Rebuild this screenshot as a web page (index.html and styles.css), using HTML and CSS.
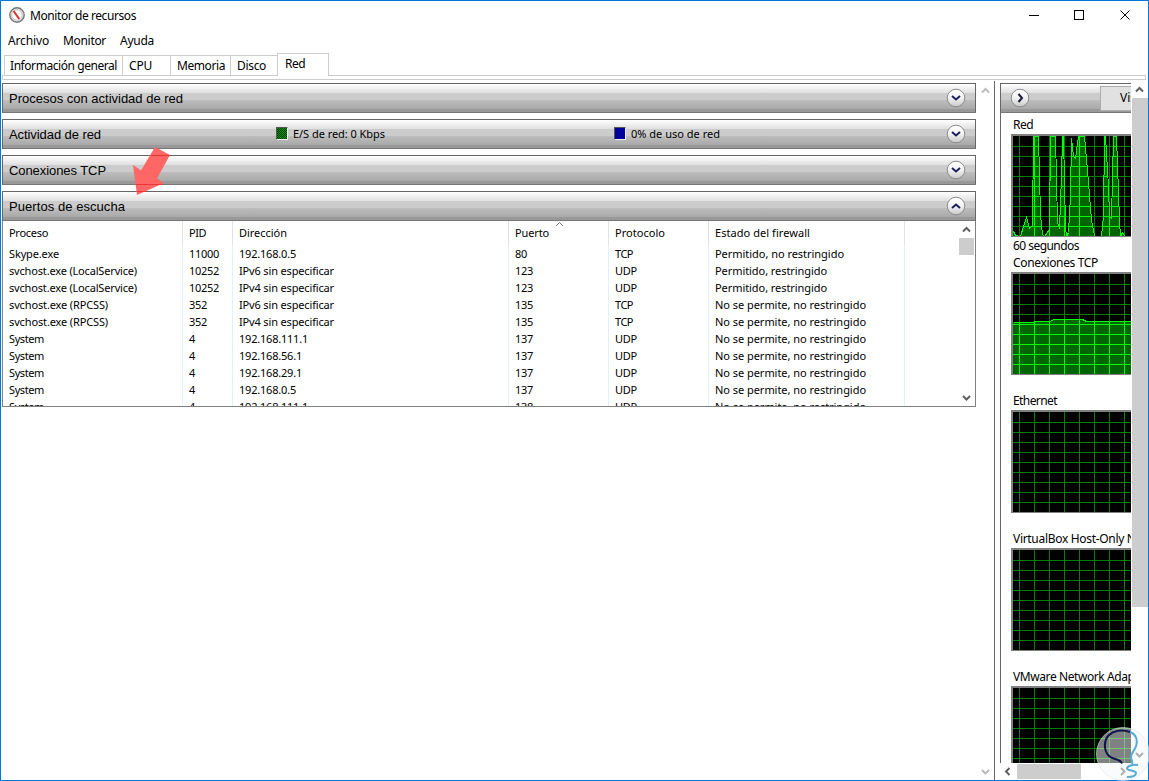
FILE: index.html
```html
<!DOCTYPE html>
<html lang="es">
<head>
    <meta charset="UTF-8">
    <meta name="viewport" content="width=device-width, initial-scale=1.0">
    <title>Monitor de recursos</title>
    <link rel="stylesheet" href="styles.css">
</head>
<body>
    <div class="window">
        <header class="titlebar">
            <svg class="app-icon" width="16" height="16" viewBox="0 0 16 16">
                <circle cx="8" cy="8" r="7.2" fill="#e4e4e4" stroke="#777" stroke-width="1.4"/>
                <circle cx="8" cy="8" r="5.2" fill="#fff" stroke="#bbb" stroke-width=".8"/>
                <path d="M4.6 4l5.6 8" stroke="#e32a2a" stroke-width="2"/>
            </svg>
            <h1><span class="fit" data-w="106">Monitor de recursos</span></h1>
            <svg class="win-buttons" width="110" height="12" viewBox="0 0 110 12" fill="none" stroke="#000">
                <path d="M4 6.500h10"/>
                <rect x="49.500" y="1.500" width="9" height="9"/>
                <path d="M95.500 1.500l9 9m0-9l-9 9"/>
            </svg>
        </header>
        <nav class="menu">
            <span class="fit" data-w="41">Archivo</span>
            <span class="fit" data-w="43">Monitor</span>
            <span class="fit" data-w="34">Ayuda</span>
        </nav>
        <div class="tabs">
            <div class="tab tab-info"><span class="fit" data-w="107">Información general</span></div>
            <div class="tab tab-cpu"><span class="fit" data-w="23">CPU</span></div>
            <div class="tab tab-mem"><span class="fit" data-w="48">Memoria</span></div>
            <div class="tab tab-disk"><span class="fit" data-w="29">Disco</span></div>
            <div class="tab active"><span class="fit" data-w="20">Red</span></div>
        </div>
        <div class="tab-edge"></div>

        <main class="content">
            <div class="left">
                <div class="sections">
                    <section class="bar">
                        <h2><span class="fit" data-w="174">Procesos con actividad de red</span></h2>
                        <svg class="round" width="20" height="20"><use href="#down"/></svg>
                    </section>
                    <section class="bar">
                        <h2><span class="fit" data-w="92">Actividad de red</span></h2>
                        <div class="legend"><i class="box green"></i><span class="fit" data-w="92">E/S de red: 0 Kbps</span></div>
                        <div class="legend"><i class="box blue"></i><span class="fit" data-w="89">0% de uso de red</span></div>
                        <svg class="round" width="20" height="20"><use href="#down"/></svg>
                    </section>
                    <section class="bar">
                        <h2><span class="fit" data-w="97">Conexiones TCP</span></h2>
                        <svg class="round" width="20" height="20"><use href="#down"/></svg>
                    </section>
                    <section class="bar open">
                        <h2><span class="fit" data-w="116">Puertos de escucha</span></h2>
                        <svg class="round" width="20" height="20"><use href="#up"/></svg>
                    </section>
                    <div class="list">
                        <div class="table" id="table"></div>
                        <div class="scroll-v">
                            <svg width="15" height="17"><use href="#arrow-up"/></svg>
                            <div class="thumb"></div>
                            <svg class="last" width="15" height="17"><use href="#arrow-down"/></svg>
                        </div>
                    </div>
                </div>
                <div class="scroll-v idle">
                    <svg width="15" height="17"><use href="#arrow-up"/></svg>
                    <svg class="last" width="15" height="17"><use href="#arrow-down"/></svg>
                </div>
            </div>

            <aside class="right">
                <div class="pane">
                    <div class="bar bar-side">
                        <svg class="round" width="20" height="20"><use href="#next"/></svg>
                        <button type="button" class="views">Vistas</button>
                    </div>
                    <div class="charts" id="charts"></div>
                    <div class="scroll-h">
                        <svg width="17" height="17"><use href="#arrow-left"/></svg>
                        <div class="thumb"></div>
                        <svg class="last" width="17" height="17"><use href="#arrow-right"/></svg>
                    </div>
                </div>
                <div class="scroll-v side">
                    <svg width="15" height="17"><use href="#arrow-up"/></svg>
                    <div class="thumb"></div>
                    <svg class="last" width="15" height="17"><use href="#arrow-down"/></svg>
                </div>
            </aside>
        </main>
    </div>

    <!-- flecha roja -->
    <svg class="pointer" width="40" height="52" viewBox="0 0 40 52">
        <path d="M23 1L38 9 25 32.500 32 37 5 49 1 19 9 24.500z" fill="#ff6666"/>
        <path d="M19 9.500h19M4 38.500h26M5 45.500h9" stroke="#ec3636" stroke-width="1"/>
    </svg>

    <!-- marca de agua -->
    <svg class="watermark" width="54" height="54" viewBox="0 0 54 54">
        <circle cx="28" cy="27" r="26.500" fill="#f6f7fa" fill-opacity=".52" stroke="#dfe3ee" stroke-opacity=".6"/>
        <path d="M27 36.500C25 31 18 33 14 29 8 23 9 13 14 8c4-4 12-6 21-3" fill="none" stroke="#10124e" stroke-width="2"/>
        <path d="M35 5c6 2 8 8 6 14-1 4-5 7-5 11 0 3 2 4 1 7" fill="none" stroke="#55add4" stroke-width="2"/>
        <path d="M43 38c-5-1-11 1-11 3.500S41 43 41 46s-5 4-9 4" fill="none" stroke="#55add4" stroke-width="2"/>
    </svg>

    <svg class="defs" width="0" height="0">
        <defs>
            <linearGradient id="shine" x1="0" y1="0" x2="0" y2="1">
                <stop offset="0" stop-color="#fff"/>
                <stop offset=".5" stop-color="#f2f2f2"/>
                <stop offset="1" stop-color="#c8c8c8"/>
            </linearGradient>
            <symbol id="disc" viewBox="0 0 20 20"><circle cx="10" cy="10" r="8.800" fill="url(#shine)" stroke="#8c8c8c"/></symbol>
            <g id="down"><use href="#disc" width="20" height="20"/><path d="M6 8l4 3.500L14 8" fill="none" stroke="#1e1e5a" stroke-width="2"/></g>
            <g id="up"><use href="#disc" width="20" height="20"/><path d="M6 12l4-3.500 4 3.500" fill="none" stroke="#1e1e5a" stroke-width="2"/></g>
            <g id="next"><use href="#disc" width="20" height="20"/><path d="M8.500 6l3.500 4-3.500 4" fill="none" stroke="#1e1e3c" stroke-width="2"/></g>
            <path id="arrow-up" d="M4 10.500L7.500 7l3.500 3.500" fill="none" stroke="currentColor" stroke-width="2"/>
            <path id="arrow-down" d="M4 7l3.500 3.500L11 7" fill="none" stroke="currentColor" stroke-width="2"/>
            <path id="arrow-left" d="M9.500 5L6 8.500 9.500 12" fill="none" stroke="currentColor" stroke-width="2"/>
            <path id="arrow-right" d="M7 5l3.500 3.500L7 12" fill="none" stroke="currentColor" stroke-width="2"/>
        </defs>
    </svg>

    <script src="script.js"></script>
</body>
</html>
```
FILE: styles.css
```css
* {
    box-sizing: border-box;
}
body {
    margin: 0;
    font-family: 'Noto Sans', 'Open Sans', sans-serif;
    font-size: 12px;
    color: #000;
    background: #fff;
    overflow: hidden;
}
h1, h2 {
    margin: 0;
    font-size: inherit;
    font-weight: normal;
}
svg {
    display: block;
    flex: none;
}
.fit {
    white-space: nowrap;
}
.defs {
    position: absolute;
}
.window {
    width: 1149px;
    height: 781px;
    border: 1px solid #0078d7;
    display: flex;
    flex-direction: column;
}
.titlebar {
    height: 29px;
    padding: 0 13px 1px 8px;
    display: flex;
    align-items: center;
}
.titlebar h1 {
    flex: 1;
    margin-left: 5px;
}
.menu {
    height: 22px;
    padding: 0 0 1px 7px;
    display: flex;
    align-items: center;
    gap: 14px;
}
.tabs {
    height: 24px;
    padding-left: 2px;
    display: flex;
    align-items: flex-end;
    border-bottom: 1px solid #ccc;
    margin: 0 2px 0 1px;
}
.tab {
    height: 20px;
    border: 1px solid #ccc;
    border-bottom: 0;
    border-right: 0;
    padding-left: 5px;
    line-height: 20px;
}
.tab-info { width: 118px; }
.tab-cpu { width: 48px; padding-left: 6px; }
.tab-mem { width: 60px; padding-left: 6px; }
.tab-disk { width: 47px; padding-left: 6px; }
.tab.active {
    width: 52px;
    height: 23px;
    margin-bottom: -1px;
    padding-left: 7px;
    background: #fff;
    border-right: 1px solid #ccc;
}
.tab-edge {
    height: 4px;
    margin: 0 2px 0 1px;
    border: 1px solid #ccc;
    border-top: 0;
}
.content {
    flex: 1;
    min-height: 0;
    display: flex;
}
.left {
    width: 994px;
    padding: 2px 0 0 1px;
    display: flex;
    margin-top: 1px;
    border-right: 1px solid #666;
}
.sections {
    width: 974px;
    flex: none;
}
.bar {
    height: 30px;
    margin-bottom: 6px;
    border: 1px solid #666;
    border-bottom-color: #777;
    display: flex;
    align-items: center;
    padding: 0 9px 0 6px;
    background: linear-gradient(#fff 0, #dfdfdf 9px, #ccc 9px, #ccc 16px, #bdbdbd 16px, #a9a9a9 25px, #999 25px);
}
.bar h2 {
    flex: 1;
    font-family: 'Liberation Sans', Arial, sans-serif;
    font-size: 13px;
}
.bar.open {
    margin-bottom: 0;
}
.legend {
    width: 338px;
    display: flex;
    align-items: center;
    gap: 5px;
    padding-bottom: 2px;
    font-size: 11px;
}
.bar .legend + .legend {
    flex: 1;
}
.bar:has(.legend) h2 {
    flex: 0 0 267px;
}
.box {
    width: 12px;
    height: 13px;
    border: 1px solid #555;
    border-right-color: #eee;
    border-bottom-color: #eee;
}
.green {
    background: repeating-conic-gradient(#003c00 0 25%, #009000 0 50%) 0 0 / 2px 2px;
}
.blue {
    background: #00009c;
}
.round {
    margin-bottom: 1px;
}
.list {
    height: 186px;
    border: 1px solid #808080;
    border-top: 0;
    display: flex;
    overflow: hidden;
    font-size: 11px;
}
.table {
    flex: 1;
    display: flex;
}
.col {
    flex: none;
    border-right: 1px solid #e1f2fd;
    padding-left: 6px;
    position: relative;
}
.col-head {
    height: 24px;
    line-height: 24px;
    margin-right: -1px;
    border-right: 1px solid #e2e2e2;
}
.cell {
    height: 17px;
    line-height: 17px;
}
.sort {
    position: absolute;
    left: 46px;
    top: 0;
}
.scroll-v {
    width: 15px;
    margin-right: 1px;
    display: flex;
    flex-direction: column;
    color: #606060;
}
.thumb {
    background: #cdcdcd;
}
.scroll-v .thumb {
    height: 17px;
}
.last {
    margin-top: auto;
}
.scroll-v.idle {
    margin: -1px 0 0 2px;
    color: #bbb;
}
.right {
    flex: 1;
    margin-left: 5px;
    padding-top: 2px;
    display: flex;
    min-width: 0;
}
.pane {
    width: 131px;
    margin-top: 1px;
    display: flex;
    flex-direction: column;
    overflow: hidden;
}
.bar-side {
    flex: none;
    margin: 0;
    border-right: 0;
    padding: 0 0 0 9px;
}
.views {
    flex: none;
    width: 80px;
    height: 25px;
    margin-left: 70px;
    padding: 0 0 1px 19px;
    text-align: left;
    border: 1px solid #adadad;
    background: #e1e1e1;
    font: inherit;
}
.charts {
    flex: 1;
    min-height: 0;
    overflow: hidden;
    border-left: 1px solid #666;
    padding-left: 10px;
}
.chart {
    height: 138px;
}
.chart-name {
    height: 21px;
    padding: 3px 0 0 2px;
    line-height: 17px;
    white-space: nowrap;
}
.chart-foot {
    height: 14px;
    padding-left: 2px;
    line-height: 17px;
}
.side {
    width: 16px;
    margin: -1px 0 0 1px;
}
.side .thumb {
    height: 509px;
}
.side .last {
    margin-bottom: 17px;
}
.scroll-h {
    height: 17px;
    display: flex;
    color: #606060;
}
.scroll-h .thumb {
    width: 64px;
    height: 15px;
    margin-top: 1px;
}
.scroll-h .last {
    margin-left: auto;
}
.pointer {
    position: absolute;
    left: 132px;
    top: 146px;
}
.watermark {
    position: absolute;
    left: 1095px;
    top: 727px;
}
```
FILE: script.js
```js
const columns = [
    { name: 'Proceso', width: 180, nameWidth: 39 },
    { name: 'PID', width: 50, nameWidth: 17 },
    { name: 'Dirección', width: 276, nameWidth: 48 },
    { name: 'Puerto', width: 100, nameWidth: 34, sorted: true },
    { name: 'Protocolo', width: 100, nameWidth: 50 },
    { name: 'Estado del firewall', width: 196, nameWidth: 95 }
];

const rows = [
    ['Skype.exe', '11000', '192.168.0.5', '80', 'TCP', 'Permitido, no restringido'],
    ['svchost.exe (LocalService)', '10252', 'IPv6 sin especificar', '123', 'UDP', 'Permitido, restringido'],
    ['svchost.exe (LocalService)', '10252', 'IPv4 sin especificar', '123', 'UDP', 'Permitido, restringido'],
    ['svchost.exe (RPCSS)', '352', 'IPv6 sin especificar', '135', 'TCP', 'No se permite, no restringido'],
    ['svchost.exe (RPCSS)', '352', 'IPv4 sin especificar', '135', 'TCP', 'No se permite, no restringido'],
    ['System', '4', '192.168.111.1', '137', 'UDP', 'No se permite, no restringido'],
    ['System', '4', '192.168.56.1', '137', 'UDP', 'No se permite, no restringido'],
    ['System', '4', '192.168.29.1', '137', 'UDP', 'No se permite, no restringido'],
    ['System', '4', '192.168.0.5', '137', 'UDP', 'No se permite, no restringido'],
    ['System', '4', '192.168.111.1', '138', 'UDP', 'No se permite, no restringido']
];

// ancho de cada texto en píxeles
const widths = {
    'Skype.exe': 50, 'svchost.exe (LocalService)': 128, 'svchost.exe (RPCSS)': 99, 'System': 35,
    '11000': 30, '10252': 30, '352': 18, '4': 6,
    '192.168.0.5': 57, '192.168.111.1': 69, '192.168.56.1': 63, '192.168.29.1': 63,
    'IPv6 sin especificar': 95, 'IPv4 sin especificar': 95,
    '80': 12, '123': 18, '135': 18, '137': 18, '138': 18, 'TCP': 18, 'UDP': 22,
    'Permitido, no restringido': 129, 'Permitido, restringido': 112, 'No se permite, no restringido': 151
};

document.getElementById('table').innerHTML = columns.map((col, i) => `
    <div class="col" style="width:${col.width}px">
        <div class="col-head"><span class="fit" data-w="${col.nameWidth}">${col.name}</span></div>
        ${col.sorted ? '<svg class="sort" width="9" height="6"><path d="M1 5l3.500-3.500L8 5" fill="none" stroke="#777"/></svg>' : ''}
        ${rows.map(row => `<div class="cell"><span class="fit" data-w="${widths[row[i]]}">${row[i]}</span></div>`).join('')}
    </div>`).join('');

const charts = [
    {
        name: 'Red', nameWidth: 20, foot: '60 segundos',
        line: '0,95 2,99 7,100 10,90 13,81 16,92 19,89 20,0 25,0 27,78 29,98 31,100 36,93 37,0 42,0 44,86 46,92 48,40 49,0 50,0 52,90 53,100 55,96 57,60 58,2 60,20 62,22 65,0 71,0 75,46 78,84 81,99 82,100 88,100 90,80 91,0 92,0 95,50 96,80 98,82 100,0 103,0 106,84 107,100 109,96 111,99 112,100 119,100'
    },
    { name: 'Conexiones TCP', nameWidth: 85, line: '0,48 20,48 21,47 37,47 40,45 69,45 73,47 119,47' },
    { name: 'Ethernet', nameWidth: 44 },
    { name: 'VirtualBox Host-Only Network', nameWidth: 160 },
    { name: 'VMware Network Adapter VMnet1', nameWidth: 180 }
];

function grid() {
    let d = '';
    for (let x = 6; x < 120; x += 15) d += `M${x} 0h1v101h-1z`;
    for (let y = 10; y < 100; y += 10) d += `M0 ${y}h120v1h-120z`;
    return d;
}

document.getElementById('charts').innerHTML = charts.map((chart, i) => {
    const area = chart.line ? `0,101 ${chart.line} 119,101` : '';
    return `
    <div class="chart">
        <div class="chart-name"><span class="fit" data-w="${chart.nameWidth}">${chart.name}</span></div>
        <svg width="120" height="103" viewBox="0 0 120 103" shape-rendering="crispEdges">
            <rect width="120" height="103" fill="#808080"/>
            <svg x="2" y="2" width="118" height="100">
                <rect width="118" height="100" fill="#000"/>
                <path d="${grid()}" fill="#008000"/>
                <clipPath id="area${i}"><polygon points="${area}"/></clipPath>
                <g clip-path="url(#area${i})">
                    <rect width="118" height="101" fill="#006400"/>
                    <path d="${grid()}" fill="#00ff00"/>
                </g>
                <polyline points="${chart.line || ''}" transform="translate(.5 .5)" fill="none" stroke="#00ff00"/>
            </svg>
        </svg>
        <div class="chart-foot">${chart.foot ? `<span class="fit" data-w="66">${chart.foot}</span>` : ''}</div>
    </div>`;
}).join('');

// reparte la diferencia de ancho entre las letras
document.querySelectorAll('.fit').forEach(el => {
    const diff = el.dataset.w - el.getBoundingClientRect().width;
    el.style.letterSpacing = diff / el.textContent.length + 'px';
});
```
